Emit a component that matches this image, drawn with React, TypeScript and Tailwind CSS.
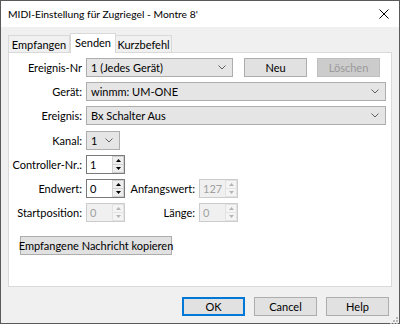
import React from "react";

const font = "font-['Lato',sans-serif] text-[11px] leading-none";

function Chevron({ color = "#606060" }: { color?: string }) {
  return (
    <svg width="8" height="5" viewBox="0 0 8 5" className="shrink-0">
      <path d="M0.5 0.5 L4 4 L7.5 0.5" fill="none" stroke={color} strokeWidth="1" />
    </svg>
  );
}

function Combo({ value, width }: { value: string; width: string }) {
  return (
    <div
      className={`${width} h-[19px] flex items-center justify-between border border-[#adadad] bg-[#e5e5e5] pl-[4px] pr-[6px]`}
    >
      <span className="text-black">{value}</span>
      <Chevron />
    </div>
  );
}

function Spin({ value, disabled }: { value: string; disabled?: boolean }) {
  const arrow = disabled ? "#b5b5b5" : "#000";
  return (
    <div
      className={`w-[39px] h-[19px] flex border ${
        disabled ? "border-[#cccccc] bg-[#f0f0f0]" : "border-[#7a7a7a] bg-white"
      }`}
    >
      <div
        className={`flex-1 flex items-center pl-[3px] ${
          disabled ? "text-[#a0a0a0]" : "text-black"
        }`}
      >
        {value}
      </div>
      <div className="w-[12px] flex flex-col">
        <div
          className={`flex-1 flex items-center justify-center border ${
            disabled ? "border-[#e3e3e3] bg-[#f4f4f4]" : "border-[#d0d0d0] bg-[#eeeeee]"
          }`}
        >
          <svg width="5" height="3" viewBox="0 0 5 3">
            <path d="M0 3 L2.5 0 L5 3 Z" fill={arrow} />
          </svg>
        </div>
        <div
          className={`flex-1 flex items-center justify-center border border-t-0 ${
            disabled ? "border-[#e3e3e3] bg-[#f4f4f4]" : "border-[#d0d0d0] bg-[#eeeeee]"
          }`}
        >
          <svg width="5" height="3" viewBox="0 0 5 3">
            <path d="M0 0 L2.5 3 L5 0 Z" fill={arrow} />
          </svg>
        </div>
      </div>
    </div>
  );
}

function Btn({
  label,
  width = "w-[63px]",
  disabled,
  focused,
}: {
  label: string;
  width?: string;
  disabled?: boolean;
  focused?: boolean;
}) {
  let cls = "border border-[#adadad] bg-[#e1e1e1] text-black";
  if (disabled) cls = "border border-[#bfbfbf] bg-[#cccccc] text-[#9a9a9a]";
  if (focused) cls = "border-2 border-[#0078d7] bg-[#e1e1e1] text-black";
  return (
    <div className={`${width} h-[19px] flex items-center justify-center whitespace-nowrap ${cls}`}>
      {label}
    </div>
  );
}

function Label({ text, width = "w-[74px]" }: { text: string; width?: string }) {
  return (
    <div className={`${width} shrink-0 text-right text-black pr-[1px] whitespace-nowrap`}>{text}</div>
  );
}

export default function App() {
  return (
    <div className={`w-[400px] h-[324px] flex flex-col border border-[#5a5a5a] bg-[#f0f0f0] ${font}`}>
      {/* title bar */}
      <div className="h-[26px] shrink-0 bg-white flex items-center justify-between pl-[7px] pr-[10px]">
        <span className="text-[10.3px] text-black">MIDI-Einstellung für Zugriegel - Montre 8'</span>
        <svg width="10" height="10" viewBox="0 0 10 10">
          <path d="M0.5 0.5 L9.5 9.5 M9.5 0.5 L0.5 9.5" stroke="#000" strokeWidth="1" />
        </svg>
      </div>

      <div className="flex-1 flex flex-col px-[7px] pt-[6px]">
        {/* tabs */}
        <div className="h-[19px] flex items-end shrink-0">
          <div className="w-[62px] h-[17px] border border-b-0 border-[#d9d9d9] bg-[#f0f0f0] flex items-center justify-center text-black">
            Empfangen
          </div>
          <div className="relative z-10 -mb-px w-[46px] h-[20px] border border-b-0 border-[#d9d9d9] bg-white flex items-center justify-center pb-[2px] text-black">
            Senden
          </div>
          <div className="w-[56px] h-[17px] border border-b-0 border-l-0 border-[#d9d9d9] bg-[#f0f0f0] flex items-center justify-center text-black">
            Kurzbefehl
          </div>
        </div>

        {/* panel */}
        <div className="h-[235px] shrink-0 border border-[#d9d9d9] bg-white flex flex-col">
          <div className="mt-[5px] flex items-center">
            <Label text="Ereignis-Nr" />
            <div className="ml-[3px] flex items-center">
              <Combo value="1 (Jedes Gerät)" width="w-[147px]" />
              <div className="ml-[11px]">
                <Btn label="Neu" />
              </div>
              <div className="ml-[10px]">
                <Btn label="Löschen" disabled />
              </div>
            </div>
          </div>

          <div className="mt-[5px] flex items-center">
            <Label text="Gerät:" />
            <div className="ml-[3px]">
              <Combo value="winmm: UM-ONE" width="w-[300px]" />
            </div>
          </div>

          <div className="mt-[5px] flex items-center">
            <Label text="Ereignis:" />
            <div className="ml-[3px]">
              <Combo value="Bx Schalter Aus" width="w-[300px]" />
            </div>
          </div>

          <div className="mt-[6px] flex items-center">
            <Label text="Kanal:" />
            <div className="ml-[3px]">
              <Combo value="1" width="w-[34px]" />
            </div>
          </div>

          <div className="mt-[5px] flex items-center">
            <Label text="Controller-Nr.:" />
            <div className="ml-[3px]">
              <Spin value="1" />
            </div>
          </div>

          <div className="mt-[5px] flex items-center">
            <Label text="Endwert:" />
            <div className="ml-[3px]">
              <Spin value="0" />
            </div>
            <Label text="Anfangswert:" width="w-[71px]" />
            <div className="ml-[3px]">
              <Spin value="127" disabled />
            </div>
          </div>

          <div className="mt-[5px] flex items-center">
            <Label text="Startposition:" />
            <div className="ml-[3px]">
              <Spin value="0" disabled />
            </div>
            <Label text="Länge:" width="w-[71px]" />
            <div className="ml-[3px]">
              <Spin value="0" disabled />
            </div>
          </div>

          <div className="mt-[14px] ml-[11px]">
            <Btn label="Empfangene Nachricht kopieren" width="w-[152px]" />
          </div>
        </div>

        {/* bottom buttons */}
        <div className="mt-[10px] flex justify-end gap-[9px] pr-[3px]">
          <Btn label="OK" focused />
          <Btn label="Cancel" />
          <Btn label="Help" />
        </div>
        <div className="flex-1 flex justify-end items-end -mr-[6px]">
          <svg width="9" height="9" viewBox="0 0 9 9">
            <rect x="7" y="1" width="2" height="2" fill="#b8b8b8" />
            <rect x="4" y="4" width="2" height="2" fill="#b8b8b8" />
            <rect x="7" y="4" width="2" height="2" fill="#b8b8b8" />
            <rect x="1" y="7" width="2" height="2" fill="#b8b8b8" />
            <rect x="4" y="7" width="2" height="2" fill="#b8b8b8" />
            <rect x="7" y="7" width="2" height="2" fill="#b8b8b8" />
          </svg>
        </div>
      </div>
    </div>
  );
}
